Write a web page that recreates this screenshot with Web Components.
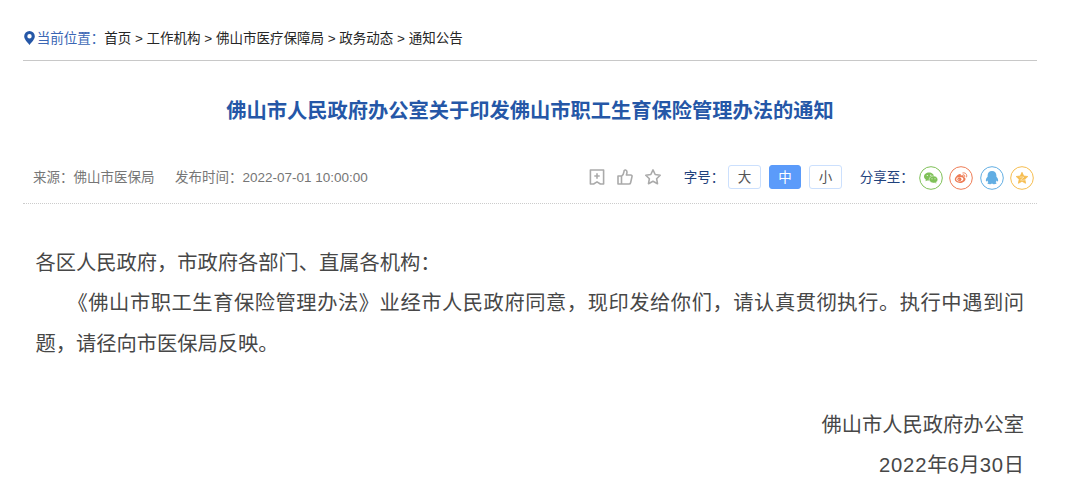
<!DOCTYPE html>
<html lang="zh-CN">
<head>
<meta charset="utf-8">
<title>佛山市人民政府办公室关于印发佛山市职工生育保险管理办法的通知</title>
<style>
  body {
    margin: 0;
    background: #fff;
    font-family: "Liberation Sans", "Noto Sans CJK SC", sans-serif;
    font-size: 13.5px;
    text-spacing-trim: space-all;
  }
</style>
</head>
<body>
<notice-page>
  <bread-crumb slot="nav" label="当前位置：" trail="首页,工作机构,佛山市医疗保障局,政务动态,通知公告"></bread-crumb>
  <span slot="title">佛山市人民政府办公室关于印发佛山市职工生育保险管理办法的通知</span>
  <notice-meta slot="meta" source="佛山市医保局" date="2022-07-01 10:00:00"></notice-meta>
  <notice-body></notice-body>
</notice-page>

<script>
class BreadCrumb extends HTMLElement {
  constructor() {
    super();
    this.attachShadow({ mode: "open" });
  }

  static get styles() {
    return /* css */`
      :host {
        display: flex;
        align-items: center;
        box-sizing: border-box;
        height: 46px;
        border-bottom: 1px solid #c8c8c8;
        color: #262626;
        white-space: pre;
      }

      svg {
        width: 11px;
        height: 14px;
        margin: 0 1.7px 0 1px;
      }

      span {
        padding-bottom: 2px;
      }

      .label {
        color: #3a66b4;
      }
    `;
  }

  connectedCallback() {
    this.render();
  }

  render() {
    const trail = this.getAttribute("trail").split(",").join(" > ");
    this.shadowRoot.innerHTML = /* html */`
    <style>${BreadCrumb.styles}</style>
    <svg viewBox="0 0 11 14"><path fill="#2557a7" fill-rule="evenodd" d="M5.5 0A5.3 5.3 0 0 0 .2 5.3C.2 8.5 3.2 11 5.5 14 7.8 11 10.8 8.5 10.8 5.3A5.3 5.3 0 0 0 5.5 0Zm0 3.1a2.2 2.2 0 1 1 0 4.4 2.2 2.2 0 0 1 0-4.4Z"/></svg>
    <span class="label">${this.getAttribute("label")}</span><span>${trail}</span>
    `;
  }
}

class FontSize extends HTMLElement {
  constructor() {
    super();
    this.attachShadow({ mode: "open" });
  }

  static get styles() {
    return /* css */`
      :host {
        display: flex;
        align-items: center;
        color: #1f427c;
      }

      span {
        padding-bottom: 2px;
      }

      .sizes {
        display: flex;
        gap: 8px;
        margin-left: 4px;
      }

      button {
        box-sizing: border-box;
        width: 32.5px;
        height: 24px;
        padding: 1px 0 0;
        border: 1px solid #cce0fd;
        border-radius: 3px;
        background: #fff;
        color: #555;
        font: inherit;
        line-height: 22px;
      }

      .active {
        border-color: #5b9bfa;
        background: #5b9bfa;
        color: #fff;
      }
    `;
  }

  connectedCallback() {
    this.shadowRoot.addEventListener("click", ({ target }) => {
      if (!target.matches("button")) return;
      this.shadowRoot.querySelector(".active").classList.remove("active");
      target.classList.add("active");
    });
    this.render();
  }

  render() {
    this.shadowRoot.innerHTML = /* html */`
    <style>${FontSize.styles}</style>
    <span>字号：</span>
    <div class="sizes">
      <button>大</button>
      <button class="active">中</button>
      <button>小</button>
    </div>
    `;
  }
}

class ShareLinks extends HTMLElement {
  constructor() {
    super();
    this.attachShadow({ mode: "open" });
  }

  static get styles() {
    return /* css */`
      :host {
        display: flex;
        align-items: center;
        color: #1f427c;
      }

      span {
        padding-bottom: 2px;
      }

      .links {
        display: flex;
        gap: 6.4px;
        margin: 2px 0 0 5px;
      }

      svg {
        display: block;
        width: 24px;
        height: 24px;
      }

      .ring {
        fill: #fff;
        stroke: currentColor;
      }

      .wechat { color: #7fc158; }
      .weibo { color: #ee7c55; }
      .qq { color: #62aee3; }
      .qzone { color: #f6bd4f; }
    `;
  }

  connectedCallback() {
    this.render();
  }

  render() {
    this.shadowRoot.innerHTML = /* html */`
    <style>${ShareLinks.styles}</style>
    <span>分享至：</span>
    <div class="links">
      <svg class="wechat" viewBox="0 0 24 24">
        <circle class="ring" cx="12" cy="12" r="11.3"/>
        <path fill="currentColor" d="M10 6.6c-2.8 0-5 1.8-5 4 0 1.3.7 2.4 1.9 3.1l-.5 1.6 1.8-.9c.6.1 1.2.2 1.8.2 2.8 0 5-1.8 5-4s-2.2-4-5-4Z"/>
        <path fill="currentColor" stroke="#fff" stroke-width=".5" d="M14.6 9.9c-2.5 0-4.4 1.6-4.4 3.6s1.9 3.6 4.4 3.6c.5 0 1-.1 1.5-.2l1.5.8-.4-1.4c1-.7 1.6-1.7 1.6-2.8 0-2-1.9-3.6-4.2-3.6Z"/>
        <g fill="#fff"><circle cx="8.3" cy="9.5" r=".6"/><circle cx="11.8" cy="9.2" r=".6"/><circle cx="13" cy="12.7" r=".5"/><circle cx="16" cy="12.7" r=".5"/></g>
      </svg>
      <svg class="weibo" viewBox="0 0 24 24">
        <circle class="ring" cx="12" cy="12" r="11.3"/>
        <path fill="currentColor" d="M10.2 8.2c1.2-.5 2 .1 1.6 1.5 1.8-.7 3.3-.3 2.8 1.3 1 .3 1.9.9 1.9 1.9 0 2.3-2.7 4-5.5 4s-5.2-1.6-5.2-3.6c0-1.7 2.3-4.4 4.4-5.1Z"/>
        <ellipse cx="10.8" cy="13.2" rx="3.6" ry="2.2" fill="#fff" transform="rotate(-7 10.8 13.2)"/>
        <circle cx="10.4" cy="13.3" r="2" fill="currentColor"/>
        <circle cx="9.8" cy="13.8" r=".5" fill="#fff"/>
        <path fill="none" stroke="currentColor" stroke-linecap="round" d="M13.9 6.9c2.6-.5 4.5 1.5 3.7 4M14.2 8.8c1.2-.1 1.9.6 1.6 1.7"/>
      </svg>
      <svg class="qq" viewBox="0 0 24 24">
        <circle class="ring" cx="12" cy="12" r="11.3"/>
        <path fill="currentColor" d="M12 5.1c-2.8 0-4.4 1.9-4.4 4.4v1.2c-1.3 1.3-2 2.9-1.7 4.4.2.6.9.2 1.5-.7.1.7.5 1.3 1 1.8-1.2.5-1.4 1.7.3 1.9 1.2.2 2.7 0 3.3-.6.6.6 2.1.8 3.3.6 1.7-.2 1.5-1.4.3-1.9.5-.5.9-1.1 1-1.8.6.9 1.3 1.3 1.5.7.3-1.5-.4-3.1-1.7-4.4V9.5c0-2.5-1.6-4.4-4.4-4.4Z"/>
      </svg>
      <svg class="qzone" viewBox="0 0 24 24">
        <circle class="ring" cx="12" cy="12" r="11.3"/>
        <path fill="currentColor" stroke="currentColor" stroke-width=".8" stroke-linejoin="round" d="m12 6.3 1.7 3.7 4.1.5-3 2.8.8 4-3.6-2-3.6 2 .8-4-3-2.8 4.1-.5Z"/>
        <path fill="none" stroke="#fff" stroke-width=".5" d="M9.6 11.2c1.5-.3 3-.3 4.3 0L10.5 14c1.6.3 3 .3 4.5-.1"/>
      </svg>
    </div>
    `;
  }
}

class NoticeMeta extends HTMLElement {
  constructor() {
    super();
    this.attachShadow({ mode: "open" });
  }

  static get styles() {
    return /* css */`
      :host {
        display: flex;
        align-items: center;
        box-sizing: border-box;
        height: 53px;
        padding: 0 3px 0 10px;
        border-bottom: 1px dotted #ccc;
        color: #767676;
      }

      span {
        padding-bottom: 2px;
      }

      .date {
        margin-left: 20.5px;
      }

      .actions {
        display: flex;
        gap: 12px;
        margin: 0 22.8px 0 auto;
      }

      .actions svg {
        width: 16px;
        height: 16px;
        fill: none;
        stroke: #aaa;
        stroke-width: 1.6;
        stroke-linejoin: round;
      }

      share-links {
        margin-left: 18px;
      }
    `;
  }

  connectedCallback() {
    this.render();
  }

  render() {
    this.shadowRoot.innerHTML = /* html */`
    <style>${NoticeMeta.styles}</style>
    <span>来源：${this.getAttribute("source")}</span>
    <span class="date">发布时间：${this.getAttribute("date")}</span>
    <div class="actions">
      <svg viewBox="0 0 16 16"><path d="M1.4 1h13.2v14H11.4L8 12.9 4.6 15H1.4ZM8 4.3v5.4M5.3 7h5.4"/></svg>
      <svg viewBox="0 0 16 16"><path d="M1 7h3.5v8H1ZM4.5 7.2C7 5.8 6.8 3.5 7.1 1.8c.3-1.3 2.8-1.1 2.9 1.2 0 1.1-.3 2-.6 3h4.3c1 0 1.5.8 1.3 1.7l-1.4 6c-.2.8-.8 1.3-1.6 1.3H4.5"/></svg>
      <svg viewBox="0 0 16 16"><path d="m8 .9 2.2 4.6 5 .7-3.6 3.5.9 5L8 12.3l-4.5 2.4.9-5L.8 6.2l5-.7Z"/></svg>
    </div>
    <font-size></font-size>
    <share-links></share-links>
    `;
  }
}

class NoticeBody extends HTMLElement {
  constructor() {
    super();
    this.attachShadow({ mode: "open" });
  }

  static get styles() {
    return /* css */`
      :host {
        display: block;
        padding: 38.5px 13px 0 12.5px;
        color: #474747;
        font-size: 20.25px;
        line-height: 40.5px;
      }

      p {
        margin: 0;
        text-align: justify;
      }

      .indent {
        text-indent: 32px;
      }

      .sign {
        margin-top: 40.5px;
        text-align: right;
      }

      .num {
        letter-spacing: 0.75px;
      }
    `;
  }

  connectedCallback() {
    this.render();
  }

  render() {
    this.shadowRoot.innerHTML = /* html */`
    <style>${NoticeBody.styles}</style>
    <p>各区人民政府，市政府各部门、直属各机构：</p>
    <p class="indent">《佛山市职工生育保险管理办法》业经市人民政府同意，现印发给你们，请认真贯彻执行。执行中遇到问题，请径向市医保局反映。</p>
    <p class="sign">佛山市人民政府办公室<br><span class="num">2022</span>年<span class="num">6</span>月<span class="num">30</span>日</p>
    `;
  }
}

class NoticePage extends HTMLElement {
  constructor() {
    super();
    this.attachShadow({ mode: "open" });
  }

  static get styles() {
    return /* css */`
      :host {
        display: block;
        width: 1014px;
        padding: 15px 0 0 23px;
      }

      h1 {
        margin: 0;
        height: 90px;
        color: #2557a7;
        font-size: 20.25px;
        font-weight: bold;
        line-height: 101px;
        text-align: center;
      }
    `;
  }

  connectedCallback() {
    this.render();
  }

  render() {
    this.shadowRoot.innerHTML = /* html */`
    <style>${NoticePage.styles}</style>
    <slot name="nav"></slot>
    <h1><slot name="title"></slot></h1>
    <slot name="meta"></slot>
    <slot></slot>
    `;
  }
}

customElements.define("bread-crumb", BreadCrumb);
customElements.define("font-size", FontSize);
customElements.define("share-links", ShareLinks);
customElements.define("notice-meta", NoticeMeta);
customElements.define("notice-body", NoticeBody);
customElements.define("notice-page", NoticePage);
</script>
</body>
</html>
